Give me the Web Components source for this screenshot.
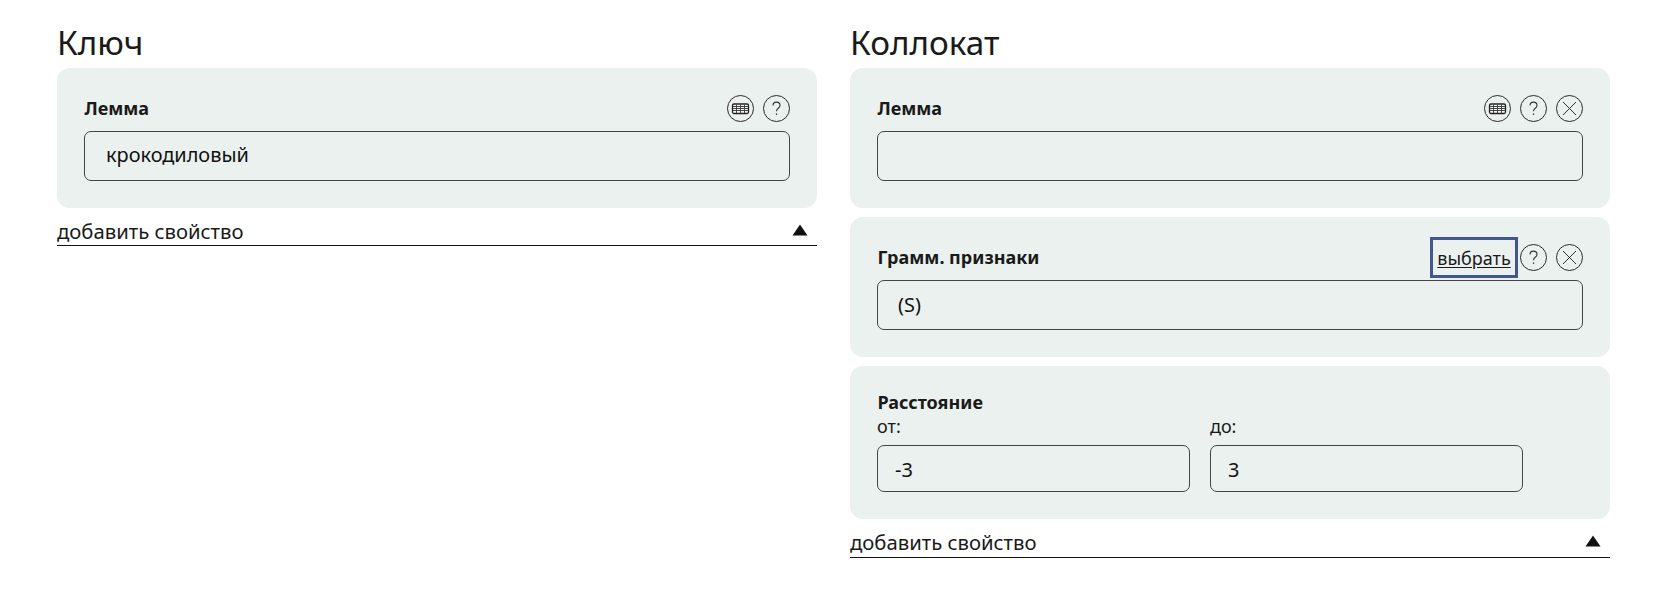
<!DOCTYPE html>
<html lang="ru">
<head>
<meta charset="utf-8">
<title>Поиск коллокаций</title>
<style>
  body {
    margin: 0;
    background: #fff;
    color: #1a1a1a;
    font-family: "Noto Sans", sans-serif;
  }
</style>
</head>
<body>
<search-page>
  <query-column heading="Ключ">
    <query-card>
      <card-head label="Лемма">
        <round-icon kind="keyboard"></round-icon>
        <round-icon kind="help"></round-icon>
      </card-head>
      <text-box>крокодиловый</text-box>
    </query-card>
  </query-column>
  <query-column heading="Коллокат">
    <query-card>
      <card-head label="Лемма">
        <round-icon kind="keyboard"></round-icon>
        <round-icon kind="help"></round-icon>
        <round-icon kind="close"></round-icon>
      </card-head>
      <text-box></text-box>
    </query-card>
    <query-card>
      <card-head label="Грамм. признаки">
        <pick-button>выбрать</pick-button>
        <round-icon kind="help"></round-icon>
        <round-icon kind="close"></round-icon>
      </card-head>
      <text-box inset="small">(S)</text-box>
    </query-card>
    <query-card>
      <range-fields label="Расстояние">
        <labeled-box slot="from" label="от:">-3</labeled-box>
        <labeled-box slot="to" label="до:">3</labeled-box>
      </range-fields>
    </query-card>
  </query-column>
</search-page>

<script>
class SearchPage extends HTMLElement {
  css = `
    :host {
      display: grid;
      grid-template-columns: 760px 760px;
      column-gap: 33px;
      align-items: start;
      padding: 20px 0 0 57px;
    }
  `;
  constructor() {
    super();
    this.attachShadow({ mode: "open" }).innerHTML = `<style>${this.css}</style><slot></slot>`;
  }
}

class QueryColumn extends HTMLElement {
  css = `
    :host {
      display: block;
    }
    h2 {
      margin: 0 0 3px;
      font-size: 33.3px;
      font-weight: 400;
      line-height: 45px;
    }
    .cards {
      display: flex;
      flex-direction: column;
      gap: 9px;
    }
    .add {
      display: flex;
      align-items: center;
      justify-content: space-between;
      height: 37.4px;
      border-bottom: 1px solid #111;
      font-size: 20.3px;
      line-height: 26px;
    }
    .add span {
      padding-top: 9px;
    }
    .add svg {
      display: block;
      margin: 7px 9px 0 0;
    }
  `;
  constructor() {
    super();
    this.attachShadow({ mode: "open" }).innerHTML = `
      <style>${this.css}</style>
      <h2>${this.getAttribute("heading")}</h2>
      <div class="cards"><slot></slot></div>
      <div class="add">
        <span>добавить свойство</span>
        <svg width="16" height="12" viewBox="0 0 16 12"><path d="M8 0.5 L15.5 11.5 H0.5 Z" fill="#111"/></svg>
      </div>
    `;
  }
}

class QueryCard extends HTMLElement {
  css = `
    :host {
      display: block;
      padding: 27px;
      border-radius: 13px;
      background: #eaf1ee;
    }
  `;
  constructor() {
    super();
    this.attachShadow({ mode: "open" }).innerHTML = `<style>${this.css}</style><slot></slot>`;
  }
}

class CardHead extends HTMLElement {
  css = `
    :host {
      display: flex;
      align-items: center;
      justify-content: space-between;
      height: 27px;
      margin-bottom: 9px;
    }
    .label {
      padding: 0 0 2px 0.5px;
      font-size: 18px;
      font-weight: 700;
      line-height: 24px;
    }
    .tools {
      display: flex;
      align-items: center;
      gap: 9px;
    }
  `;
  constructor() {
    super();
    this.attachShadow({ mode: "open" }).innerHTML = `
      <style>${this.css}</style>
      <span class="label">${this.getAttribute("label")}</span>
      <div class="tools"><slot></slot></div>
    `;
  }
}

const ICONS = {
  keyboard: `
    <rect x="5.5" y="9" width="16" height="9.5" rx="1.5" fill="#f4f6f5" stroke="#222" stroke-width="1.3"/>
    <path d="M6 11.5h15M6 13.5h15M6 15.5h15M9.5 10v8M13.5 10v8M17.5 10v8" stroke="#444" stroke-width="1"/>`,
  help: `
    <path d="M10 10.6c0-2.2 1.5-3.5 3.5-3.5s3.5 1.3 3.5 3.2c0 1.6-.9 2.4-2 3.2-1 .8-1.5 1.4-1.5 2.8" fill="none" stroke="#333" stroke-width="1.1"/>
    <rect x="12.9" y="18.4" width="1.2" height="1.5" fill="#333"/>`,
  close: `
    <path d="M7 7 L20 20 M20 7 L7 20" fill="none" stroke="#333" stroke-width="1"/>`
};

class RoundIcon extends HTMLElement {
  css = `
    :host {
      display: block;
      width: 27px;
      height: 27px;
    }
    svg {
      display: block;
    }
  `;
  constructor() {
    super();
    this.attachShadow({ mode: "open" }).innerHTML = `
      <style>${this.css}</style>
      <svg width="27" height="27" viewBox="0 0 27 27">
        <circle cx="13.5" cy="13.5" r="13" fill="none" stroke="#2b2b2b" stroke-width="1"/>
        ${ICONS[this.getAttribute("kind")]}
      </svg>
    `;
  }
}

class PickButton extends HTMLElement {
  css = `
    :host {
      display: flex;
      align-items: center;
      justify-content: center;
      box-sizing: border-box;
      width: 88px;
      height: 41px;
      margin: 0 -7px 0 0;
      border: 3px solid #42578f;
      font-size: 18px;
      text-decoration: underline;
      text-underline-offset: 2px;
      cursor: pointer;
    }
  `;
  constructor() {
    super();
    this.attachShadow({ mode: "open" }).innerHTML = `<style>${this.css}</style><slot></slot>`;
  }
}

class TextBox extends HTMLElement {
  css = `
    :host {
      display: block;
      box-sizing: border-box;
      height: 50px;
      padding: 0 21px;
      border: 1px solid #444;
      border-radius: 7px;
      font-size: 19.9px;
      line-height: 46px;
      color: #111;
    }
    :host([inset="small"]) {
      padding: 0 20px;
      line-height: 47px;
    }
  `;
  constructor() {
    super();
    this.attachShadow({ mode: "open" }).innerHTML = `<style>${this.css}</style><slot></slot>`;
  }
}

class RangeFields extends HTMLElement {
  css = `
    :host {
      display: block;
      margin-top: -3px;
    }
    .label {
      padding-left: 0.5px;
      margin-bottom: 1px;
      font-size: 18px;
      font-weight: 700;
      line-height: 24px;
    }
    .row {
      display: grid;
      grid-template-columns: 313px 313px;
      column-gap: 20px;
    }
  `;
  constructor() {
    super();
    this.attachShadow({ mode: "open" }).innerHTML = `
      <style>${this.css}</style>
      <div class="label">${this.getAttribute("label")}</div>
      <div class="row">
        <slot name="from"></slot>
        <slot name="to"></slot>
      </div>
    `;
  }
}

class LabeledBox extends HTMLElement {
  css = `
    :host {
      display: block;
    }
    .caption {
      margin-bottom: 7.3px;
      font-size: 18px;
      line-height: 23px;
    }
    .box {
      box-sizing: border-box;
      height: 47px;
      padding: 0 17px;
      border: 1px solid #444;
      border-radius: 7px;
      font-size: 19.9px;
      line-height: 47px;
      color: #111;
    }
  `;
  constructor() {
    super();
    this.attachShadow({ mode: "open" }).innerHTML = `
      <style>${this.css}</style>
      <div class="caption">${this.getAttribute("label")}</div>
      <div class="box"><slot></slot></div>
    `;
  }
}

customElements.define("search-page", SearchPage);
customElements.define("query-column", QueryColumn);
customElements.define("query-card", QueryCard);
customElements.define("card-head", CardHead);
customElements.define("round-icon", RoundIcon);
customElements.define("pick-button", PickButton);
customElements.define("text-box", TextBox);
customElements.define("range-fields", RangeFields);
customElements.define("labeled-box", LabeledBox);
</script>
</body>
</html>
